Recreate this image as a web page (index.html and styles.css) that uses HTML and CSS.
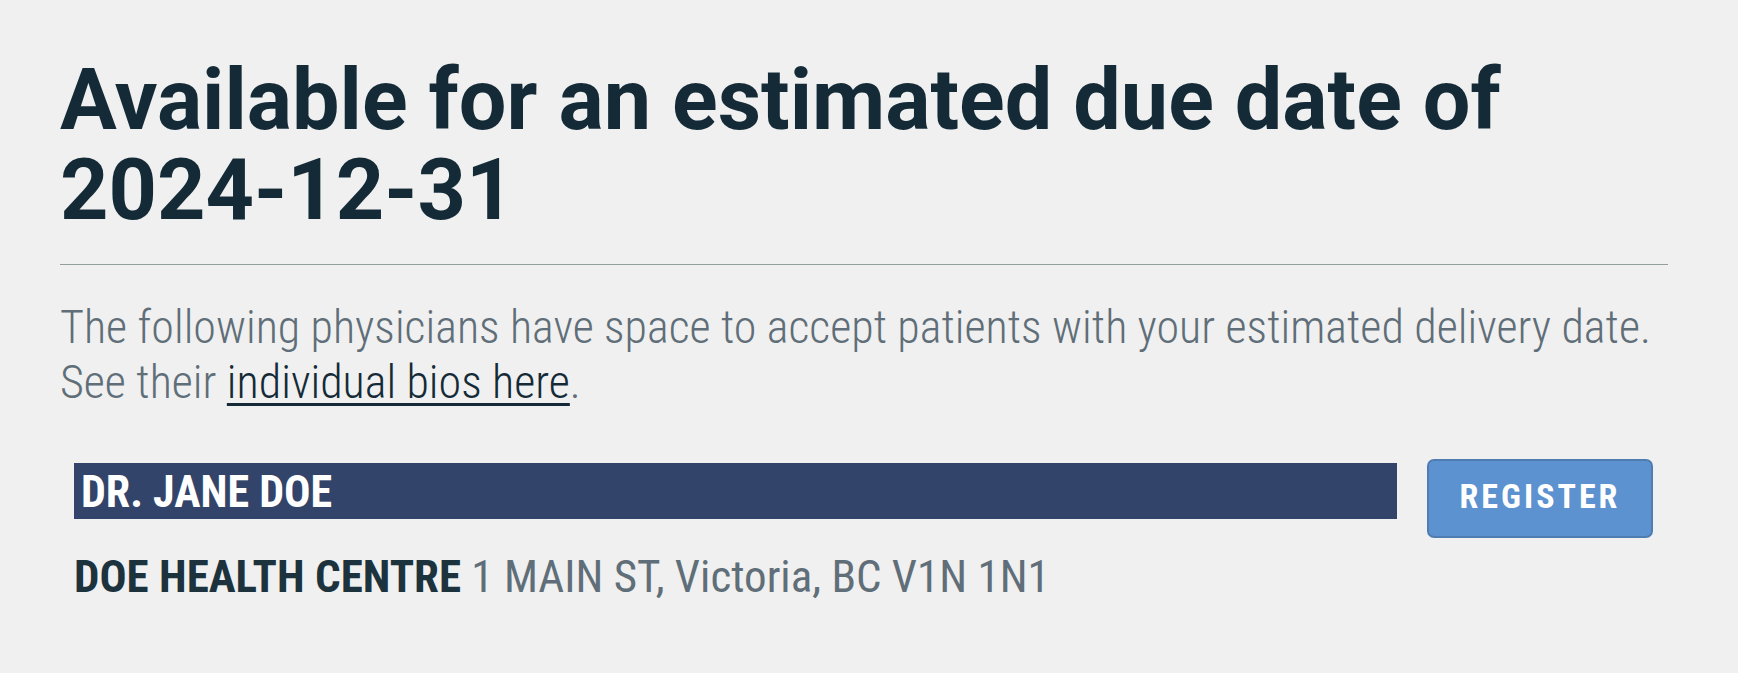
FILE: index.html
```html
<!DOCTYPE html>
<html lang="en">
<head>
<meta charset="utf-8">
<title>Available physicians</title>
<link rel="stylesheet" href="styles.css">
</head>
<body>
<main class="page">
  <h1 class="title">Available for an estimated due date of 2024-12-31</h1>
  <hr class="divider">
  <p class="intro">The following physicians have space to accept patients with your estimated delivery date. See their <a href="#" class="intro-link">individual bios here</a>.</p>
  <section class="card">
    <div class="card-info">
      <h2 class="doctor-name">DR. JANE DOE</h2>
      <p class="clinic"><strong class="clinic-name">DOE HEALTH CENTRE</strong> 1 MAIN ST, Victoria, BC V1N 1N1</p>
    </div>
    <button class="register-btn" type="button">REGISTER</button>
  </section>
</main>
</body>
</html>
```

FILE: styles.css
```css
html, body {
  margin: 0;
  padding: 0;
  background: #eff0ef;
}

.page {
  padding: 56px 70px 40px 60px;
  font-family: "Roboto Condensed", Roboto, "Liberation Sans", sans-serif;
  font-stretch: condensed;
}

.title {
  margin: 0;
  font-family: Roboto, "Liberation Sans", sans-serif;
  font-stretch: normal;
  font-weight: 700;
  font-size: 84.5px;
  line-height: 90px;
  color: #142a37;
}

.divider {
  margin: 28px 0 0;
  border: 0;
  border-top: 1px solid #939f9b;
  height: 0;
}

.intro {
  margin: 35px 0 0;
  font-size: 46px;
  line-height: 55px;
  font-weight: 300;
  color: #5f6e78;
}

.intro-link {
  color: #142a37;
  text-decoration: underline;
  text-decoration-thickness: 3px;
  text-underline-offset: 5px;
}

.card {
  margin-top: 49px;
  padding: 0 15px 0 14px;
  display: flex;
  align-items: flex-start;
  gap: 30px;
}

.card-info {
  flex: 1;
}

.doctor-name {
  margin: 4px 0 0;
  height: 56px;
  padding-left: 7px;
  background: #324469;
  color: #ffffff;
  font-size: 44px;
  line-height: 58px;
  font-weight: 700;
}

.clinic {
  margin: 30px 0 0;
  font-size: 45px;
  line-height: 55px;
  color: #5f6e78;
}

.clinic-name {
  font-weight: 700;
  color: #1c333d;
}

.register-btn {
  width: 226px;
  height: 79px;
  border: 2px solid #4f7db2;
  border-radius: 7px;
  background: #5d92d0;
  color: #ffffff;
  font-family: "Roboto Condensed", Roboto, "Liberation Sans", sans-serif;
  font-stretch: condensed;
  font-weight: 700;
  font-size: 34px;
  letter-spacing: 3px;
  padding: 0 0 6px 0;
}
```
